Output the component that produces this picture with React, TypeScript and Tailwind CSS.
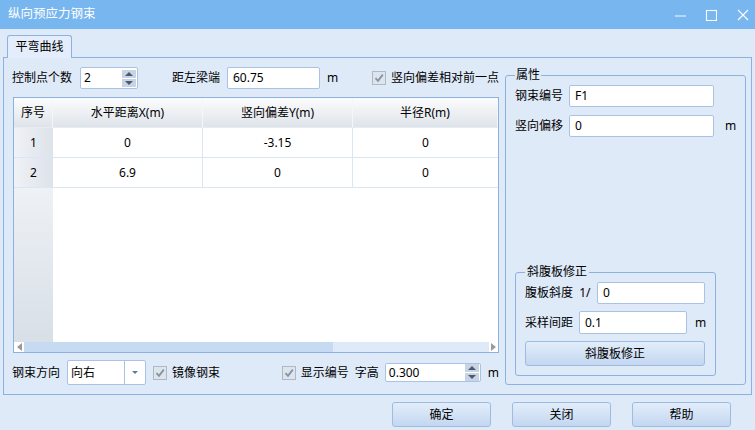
import React from "react";

const rows = [
  { id: 1, x: "0", y: "-3.15", r: "0" },
  { id: 2, x: "6.9", y: "0", r: "0" },
];

function TextBox({ value, className = "" }: { value: string; className?: string }) {
  return (
    <div
      className={`flex items-center bg-white border border-[#a9c3e6] rounded-[2px] pl-[5px] leading-none ${className}`}
    >
      {value}
    </div>
  );
}

function SpinBox({ value, className = "" }: { value: string; className?: string }) {
  return (
    <div className={`flex items-center bg-white border border-[#a9c3e6] rounded-[2px] pl-[3px] pr-[1px] ${className}`}>
      <span className="flex-1 leading-none">{value}</span>
      <div className="flex flex-col gap-[1px]">
        <div className="w-[14px] h-[8px] bg-[#c8d4e3] flex items-center justify-center">
          <svg width="8" height="4" viewBox="0 0 8 4">
            <path d="M0 4 L4 0 L8 4 Z" fill="#4a5a70" />
          </svg>
        </div>
        <div className="w-[14px] h-[8px] bg-[#c8d4e3] flex items-center justify-center">
          <svg width="8" height="4" viewBox="0 0 8 4">
            <path d="M0 0 L8 0 L4 4 Z" fill="#4a5a70" />
          </svg>
        </div>
      </div>
    </div>
  );
}

function Check() {
  return (
    <div className="w-[14px] h-[14px] shrink-0 border border-[#aeb9c8] bg-[#dde4ec] flex items-center justify-center">
      <svg width="10" height="10" viewBox="0 0 10 10">
        <path d="M1.5 5.2 L4 7.8 L8.8 1.6" fill="none" stroke="#8493a6" strokeWidth="1.8" />
      </svg>
    </div>
  );
}

function Button({ label, className = "" }: { label: string; className?: string }) {
  return (
    <div
      className={`flex items-center justify-center border border-[#9dbce4] rounded-[3px] bg-gradient-to-b from-[#e3edfa] via-[#d3e2f5] to-[#c3d7f0] leading-none ${className}`}
    >
      {label}
    </div>
  );
}

export default function App() {
  return (
    <div className="w-[755px] h-[430px] overflow-hidden bg-[#dfeaf9] flex flex-col text-[12px] text-black font-['Noto_Sans','Noto_Sans_CJK_SC',sans-serif]">
      {/* title bar */}
      <div className="h-[29px] shrink-0 bg-[#78b6f0] flex items-center pl-[8px] text-white">
        <span className="text-[12.5px] leading-none">纵向预应力钢束</span>
        <div className="ml-auto flex items-center h-full">
          <svg width="12" height="12" viewBox="0 0 12 12" className="mr-[19px]">
            <path d="M1 7 H12" stroke="#e2eefc" strokeWidth="1.2" />
          </svg>
          <svg width="12" height="12" viewBox="0 0 12 12" className="mr-[20px]">
            <rect x="1.5" y="1.5" width="10" height="10" fill="none" stroke="#ffffff" strokeWidth="1.1" />
          </svg>
          <svg width="12" height="12" viewBox="0 0 12 12" className="mr-[6px]">
            <path d="M1 1 L11 11 M11 1 L1 11" stroke="#ffffff" strokeWidth="1.1" />
          </svg>
        </div>
      </div>

      <div className="flex-1 flex flex-col px-[3px]">
        {/* tabs */}
        <div className="h-[28px] shrink-0 flex items-end">
          <div className="relative z-10 -mb-px ml-[4px] w-[65px] h-[23px] border border-b-0 border-[#8db2e2] rounded-t-[3px] bg-[#e3edfb] flex items-center justify-center leading-none">
            平弯曲线
          </div>
        </div>

        {/* tab page */}
        <div className="h-[338px] shrink-0 border border-[#8db2e2] flex pl-[8px] pt-[9px]">
          {/* left column */}
          <div className="w-[487px] flex flex-col">
            <div className="h-[22px] flex items-center">
              <span className="w-[68px]">控制点个数</span>
              <SpinBox value="2" className="w-[58px] h-[22px]" />
              <span className="w-[34px]" />
              <span className="w-[55px]">距左梁端</span>
              <TextBox value="60.75" className="w-[93px] h-[22px]" />
              <span className="w-[52px] pl-[7px]">m</span>
              <Check />
              <span className="ml-[5px]">竖向偏差相对前一点</span>
            </div>

            {/* grid */}
            <div className="mt-[8px] ml-[1px] w-[486px] h-[256px] border border-[#8db2e2] bg-white flex flex-col">
              <div className="h-[30px] grid grid-cols-[39px_150px_150px_1fr] bg-gradient-to-b from-[#fbfcfd] to-[#dfe4ea] border-b border-[#e6ecf4]">
                {["序号", "水平距离X(m)", "竖向偏差Y(m)", "半径R(m)"].map((h) => (
                  <div key={h} className="flex items-center justify-center border-r border-[#f4f7fa] leading-none">
                    {h}
                  </div>
                ))}
              </div>
              {rows.map((r) => (
                <div key={r.id} className="h-[30px] grid grid-cols-[39px_150px_150px_1fr] border-b border-[#dbe6f4]">
                  <div className="flex items-center justify-center bg-gradient-to-r from-[#eff2f6] to-[#dde3ea] leading-none">
                    {r.id}
                  </div>
                  <div className="flex items-center justify-center border-r border-[#dbe6f4] leading-none">{r.x}</div>
                  <div className="flex items-center justify-center border-r border-[#dbe6f4] leading-none">{r.y}</div>
                  <div className="flex items-center justify-center leading-none">{r.r}</div>
                </div>
              ))}
              <div className="flex-1 flex">
                <div className="w-[39px] bg-gradient-to-b from-[#eef1f5] to-[#d8dfe7]" />
                <div className="flex-1" />
              </div>
              {/* horizontal scrollbar */}
              <div className="h-[10px] flex bg-[#dfeaf9]">
                <div className="w-[10px] bg-white flex items-center justify-center">
                  <svg width="5" height="8" viewBox="0 0 5 8">
                    <path d="M5 0 L0 4 L5 8 Z" fill="#9a9a9a" />
                  </svg>
                </div>
                <div className="w-[309px] bg-[#c6daf1]" />
                <div className="flex-1" />
                <div className="w-[9px] bg-white flex items-center justify-center">
                  <svg width="5" height="8" viewBox="0 0 5 8">
                    <path d="M0 0 L5 4 L0 8 Z" fill="#9a9a9a" />
                  </svg>
                </div>
              </div>
            </div>

            {/* bottom row */}
            <div className="mt-[7px] h-[25px] flex items-center">
              <span className="w-[55px]">钢束方向</span>
              <div className="w-[79px] h-[25px] flex bg-white border border-[#a9c3e6] rounded-[2px]">
                <span className="flex-1 flex items-center pl-[3px] leading-none">向右</span>
                <div className="w-[21px] border-l border-[#a9c3e6] flex items-center justify-center">
                  <svg width="6" height="3" viewBox="0 0 6 3">
                    <path d="M0 0 L6 0 L3 3 Z" fill="#5c7ca4" />
                  </svg>
                </div>
              </div>
              <span className="w-[7px]" />
              <Check />
              <span className="w-[115px] pl-[5px]">镜像钢束</span>
              <Check />
              <span className="w-[59px] pl-[5px]">显示编号</span>
              <span className="w-[30px]">字高</span>
              <SpinBox value="0.300" className="w-[96px] h-[19px]" />
              <span className="ml-[7px]">m</span>
            </div>
          </div>

          {/* properties group */}
          <fieldset className="ml-[6px] w-[236px] self-start border border-[#8db2e2] rounded-[3px] px-[9px] pb-[8px]">
            <legend className="px-[1px] leading-[16px]">属性</legend>
            <div className="mt-[2px] h-[22px] flex items-center">
              <span className="w-[54px]">钢束编号</span>
              <TextBox value="F1" className="w-[145px] h-[22px]" />
            </div>
            <div className="mt-[8px] h-[22px] flex items-center">
              <span className="w-[54px]">竖向偏移</span>
              <TextBox value="0" className="w-[145px] h-[22px]" />
              <span className="ml-[11px]">m</span>
            </div>

            <fieldset className="mt-[127px] w-[200px] border border-[#8db2e2] rounded-[3px] px-[9px] pb-[9px]">
              <legend className="px-[2px] leading-[16px]">斜腹板修正</legend>
              <div className="mt-[2px] h-[22px] flex items-center">
                <span className="w-[72px]">腹板斜度 &nbsp;1/</span>
                <TextBox value="0" className="w-[108px] h-[22px]" />
              </div>
              <div className="mt-[7px] h-[23px] flex items-center">
                <span className="w-[54px]">采样间距</span>
                <TextBox value="0.1" className="w-[108px] h-[23px]" />
                <span className="ml-[8px]">m</span>
              </div>
              <Button label="斜腹板修正" className="mt-[7px] w-[180px] h-[25px]" />
            </fieldset>
          </fieldset>
        </div>

        {/* dialog buttons */}
        <div className="mt-[7px] flex justify-end gap-[21px] pr-[21px]">
          <Button label="确定" className="w-[99px] h-[25px]" />
          <Button label="关闭" className="w-[99px] h-[25px]" />
          <Button label="帮助" className="w-[99px] h-[25px]" />
        </div>
      </div>
    </div>
  );
}
